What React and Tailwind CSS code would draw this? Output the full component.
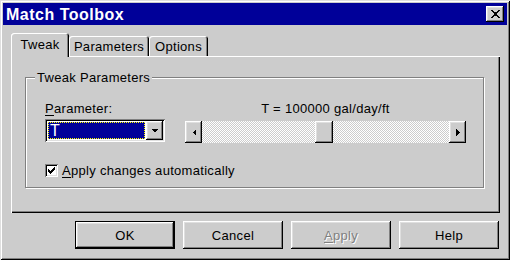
const raised =
  'shadow-[inset_-1px_-1px_#000,inset_1px_1px_#fff,inset_-2px_-2px_#808080,inset_2px_2px_#dfdfdf]'
const sunken =
  'shadow-[inset_1px_1px_#808080,inset_-1px_-1px_#fff,inset_2px_2px_#000,inset_-2px_-2px_#dfdfdf]'

function Arrow({ dir }) {
  const pts = {
    left: '4,0 4,7 0.5,3.5',
    right: '0,0 0,7 3.5,3.5',
    down: '0,0 7,0 3.5,3.5',
  }
  const size = dir === 'down' ? { w: 7, h: 4 } : { w: 4, h: 7 }
  return (
    <svg width={size.w} height={size.h} viewBox={`0 0 ${size.w} ${size.h}`} shapeRendering="crispEdges">
      <polygon points={pts[dir]} fill="#000" />
    </svg>
  )
}

function Button({ children, isDefault, disabled }) {
  return (
    <div
      className={`w-[100px] h-[28px] flex items-center justify-center ${
        isDefault ? 'border border-black' : ''
      }`}
    >
      <div
        className={`w-full h-full flex items-center justify-center ${raised} ${
          disabled ? 'text-[#808080] [text-shadow:1px_1px_0_#fff]' : 'text-black'
        }`}
      >
        {children}
      </div>
    </div>
  )
}

function Tab({ label, active, width }) {
  if (active) {
    return (
      <div className="relative z-10 h-[24px] -mb-px w-[58px] bg-[#cccccc] rounded-t-[3px] shadow-[inset_1px_1px_#fff,inset_-1px_0_#000,inset_-2px_0_#808080] flex items-center justify-center pb-[2px]">
        {label}
      </div>
    )
  }
  return (
    <div
      className={`h-[20px] ${width} rounded-t-[3px] shadow-[inset_1px_1px_#fff,inset_-1px_0_#000,inset_-2px_0_#808080] flex items-center justify-center`}
    >
      {label}
    </div>
  )
}

export default function App() {
  return (
    <div className="w-[510px] h-[260px] bg-[#cccccc] p-[3px] flex flex-col text-[13px] leading-[15px] tracking-[0.3px] text-black font-['Liberation_Sans',Arial,sans-serif] shadow-[inset_1px_1px_#dfdfdf,inset_-1px_-1px_#000,inset_2px_2px_#fff,inset_-2px_-2px_#808080]">
      <div className="h-[22px] bg-[#000099] flex items-center justify-between pl-[3px] pr-[3px]">
        <span className="text-white font-bold text-[16px] tracking-[0.5px]">Match Toolbox</span>
        <div className={`w-[18px] h-[16px] bg-[#cccccc] flex items-center justify-center ${raised}`}>
          <svg width="9" height="8" viewBox="0 0 9 8" shapeRendering="crispEdges">
            <path
              d="M0 0h2v1h-2z M7 0h2v1h-2z M1 1h2v1h-2z M6 1h2v1h-2z M2 2h5v1h-5z M3 3h3v2h-3z M2 5h5v1h-5z M1 6h2v1h-2z M6 6h2v1h-2z M0 7h2v1h-2z M7 7h2v1h-2z"
              fill="#000"
            />
          </svg>
        </div>
      </div>

      <div className="mt-[8px] ml-[8px] flex flex-col">
        <div className="flex items-end">
          <Tab label="Tweak" active />
          <Tab label="Parameters" width="w-[80px]" />
          <Tab label="Options" width="w-[59px]" />
        </div>
        <div className="w-[489px] h-[157px] pl-[14px] pt-[21px] shadow-[inset_1px_1px_#fff,inset_-1px_-1px_#000,inset_-2px_-2px_#808080]">
          <div className="relative w-[459px] h-[111px] border border-[#808080] shadow-[1px_1px_0_#fff,inset_1px_1px_0_#fff] pl-[19px] pt-[23px]">
            <span className="absolute left-[9px] top-[-8px] bg-[#cccccc] px-[2px]">Tweak Parameters</span>
            <div className="flex items-start gap-[20px]">
              <div className="w-[120px] flex flex-col">
                <span>
                  <span className="underline underline-offset-2">P</span>arameter:
                </span>
                <div className={`mt-[3px] h-[23px] bg-white p-[2px] flex ${sunken}`}>
                  <div className="ml-px my-px flex-1 bg-[#000099] border border-dotted border-[#ffff00] text-white text-[16px] leading-[15px] tracking-normal flex items-center pl-[1px]">
                    T
                  </div>
                  <div className={`ml-px w-[17px] bg-[#cccccc] flex items-center justify-center ${raised}`}>
                    <Arrow dir="down" />
                  </div>
                </div>
              </div>
              <div className="w-[281px] flex flex-col items-center">
                <span>T = 100000 gal/day/ft</span>
                <div className="mt-[5px] w-full h-[22px] flex">
                  <div className={`w-[17px] bg-[#cccccc] flex items-center justify-center ${raised}`}>
                    <Arrow dir="left" />
                  </div>
                  <div className="w-[113px] bg-[repeating-conic-gradient(#fff_0_25%,#cccccc_0_50%)] bg-[length:2px_2px]" />
                  <div className={`w-[18px] bg-[#cccccc] ${raised}`} />
                  <div className="flex-1 bg-[repeating-conic-gradient(#fff_0_25%,#cccccc_0_50%)] bg-[length:2px_2px]" />
                  <div className={`w-[17px] bg-[#cccccc] flex items-center justify-center ${raised}`}>
                    <Arrow dir="right" />
                  </div>
                </div>
              </div>
            </div>
            <div className="mt-[20px] flex items-center gap-[4px]">
              <div className={`w-[13px] h-[13px] bg-white flex items-center justify-center ${sunken}`}>
                <svg width="7" height="7" viewBox="0 0 7 7" shapeRendering="crispEdges">
                  <path
                    d="M6 0h1v1h-1z M5 1h2v1h-2z M0 2h1v1h-1z M4 2h3v1h-3z M0 3h2v1h-2z M3 3h3v1h-3z M0 4h5v1h-5z M1 5h3v1h-3z M2 6h1v1h-1z"
                    fill="#000"
                  />
                </svg>
              </div>
              <span>
                <span className="underline underline-offset-2">A</span>pply changes automatically
              </span>
            </div>
          </div>
        </div>
      </div>

      <div className="mt-[8px] pr-[8px] flex justify-end gap-[8px]">
        <Button isDefault>OK</Button>
        <Button>Cancel</Button>
        <Button disabled>
          <span>
            <span className="underline underline-offset-2">A</span>pply
          </span>
        </Button>
        <Button>Help</Button>
      </div>
    </div>
  )
}
